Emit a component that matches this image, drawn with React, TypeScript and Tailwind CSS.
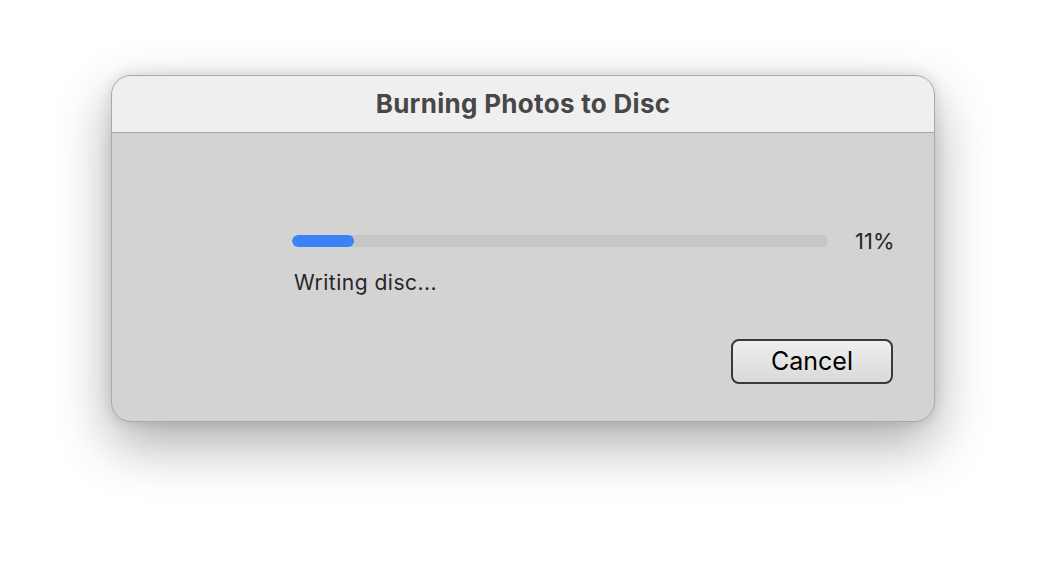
import React from 'react';

const App: React.FC = () => {
  const progress = 11;

  return (
    <div
      className="w-[1046px] h-[570px] bg-white pt-[75px] pl-[111px]"
      style={{ fontFamily: 'Inter, "Noto Sans", sans-serif' }}
    >
      <div className="w-[824px] h-[347px] rounded-[20px] border border-[#a9a9a9] overflow-hidden bg-[#d3d3d3] shadow-[0_22px_55px_rgba(0,0,0,0.33),0_0_14px_rgba(0,0,0,0.12)] flex flex-col">
        {/* Title bar */}
        <div className="h-[57px] shrink-0 bg-[#f0eff0] border-b border-[#a8a8a8] flex items-center justify-center pb-[2px]">
          <h1 className="text-[26px] font-bold text-[#474747] tracking-[0.3px]">Burning Photos to Disc</h1>
        </div>

        {/* Body */}
        <div className="flex-1 flex flex-col pt-[97px]">
          <div className="flex items-center pl-[180px]">
            <div className="w-[536px] h-[12px] rounded-full bg-[#c6c6c6] overflow-hidden">
              <div className="h-full rounded-full bg-[#3b82f7]" style={{ width: '62px' }} />
            </div>
            <span className="ml-[27px] text-[22px] text-[#262626] leading-none">{progress}%</span>
          </div>

          <p className="mt-[19px] ml-[182px] text-[21px] text-[#262626] leading-[24px] tracking-[0.5px]">Writing disc...</p>

          <div className="flex justify-end pr-[41px] mt-[44px]">
            <button className="w-[162px] h-[45px] rounded-[8px] border-2 border-[#3a3a3a] bg-gradient-to-b from-[#efefef] to-[#d9d9d9] text-[25px] text-black leading-none pb-[1px]">
              Cancel
            </button>
          </div>
        </div>
      </div>
    </div>
  );
};

export default App;
